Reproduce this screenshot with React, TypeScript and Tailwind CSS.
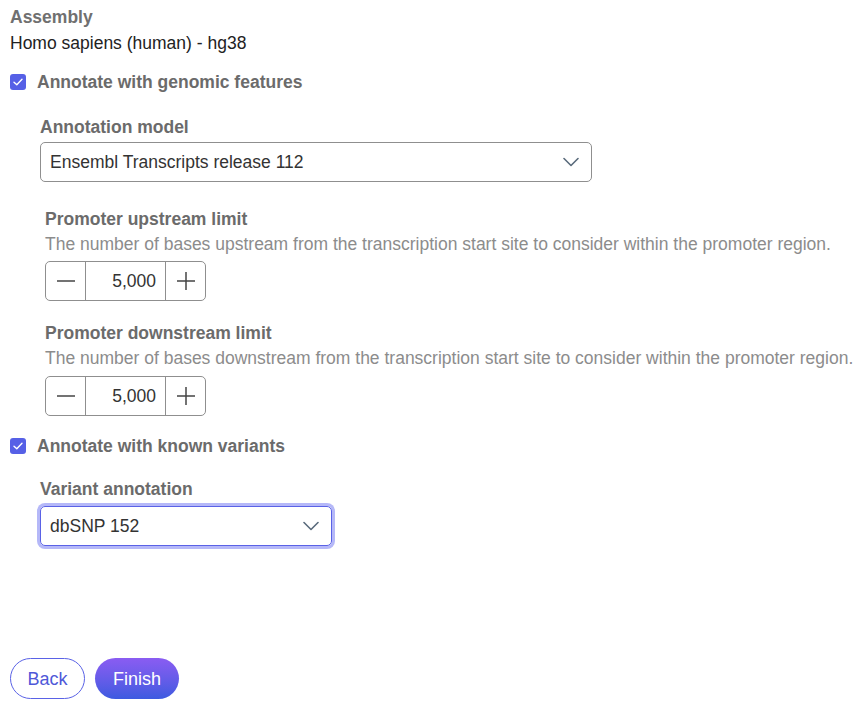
import React, { useState } from 'react';

function Checkbox({ checked, onChange }: { checked: boolean; onChange: () => void }) {
  return (
    <button
      type="button"
      onClick={onChange}
      className={`w-4 h-4 rounded-[3px] flex items-center justify-center shrink-0 ${checked ? 'bg-[#5660e6]' : 'border border-[#888] bg-white'}`}
    >
      {checked && (
        <svg width="10" height="8" viewBox="0 0 10 8" fill="none">
          <path d="M1 4.2 L3.8 6.8 L9 1.2" stroke="white" strokeWidth="1.4" strokeLinecap="round" strokeLinejoin="round" />
        </svg>
      )}
    </button>
  );
}

function Chevron() {
  return (
    <svg width="16" height="10" viewBox="0 0 16 10" fill="none">
      <path d="M1 1.5 L8 8.5 L15 1.5" stroke="#5a6b7c" strokeWidth="1.6" strokeLinecap="round" strokeLinejoin="round" />
    </svg>
  );
}

function Stepper({ value }: { value: number }) {
  const [v, setV] = useState(value);
  return (
    <div className="flex h-10 w-[161px] border border-[#8f8f8f] rounded-[5px] overflow-hidden">
      <button type="button" onClick={() => setV(v - 100)} className="w-10 flex items-center justify-center border-r border-[#8f8f8f]">
        <svg width="18" height="2" viewBox="0 0 18 2"><path d="M0 1 H18" stroke="#444" strokeWidth="1.5" /></svg>
      </button>
      <div className="flex-1 flex items-center justify-end pr-[9px] text-[#333]">{v.toLocaleString('en-US')}</div>
      <button type="button" onClick={() => setV(v + 100)} className="w-10 flex items-center justify-center border-l border-[#8f8f8f]">
        <svg width="18" height="18" viewBox="0 0 18 18"><path d="M0 9 H18 M9 0 V18" stroke="#444" strokeWidth="1.5" /></svg>
      </button>
    </div>
  );
}

export default function App() {
  const [genomic, setGenomic] = useState(true);
  const [variants, setVariants] = useState(true);

  return (
    <div className="min-h-screen bg-white text-[17.5px] leading-[20px] font-['Liberation_Sans',Arial,sans-serif] px-[10px] pt-[7px] flex flex-col">
      <div className="font-bold text-[#707070]">Assembly</div>
      <div className="mt-[6px] text-[#222]">Homo sapiens (human) - hg38</div>

      <div className="mt-[19px] flex items-center gap-[11px]">
        <Checkbox checked={genomic} onChange={() => setGenomic(!genomic)} />
        <span className="font-bold text-[#6b6b6b]">Annotate with genomic features</span>
      </div>

      <div className="pl-[30px]">
        <div className="mt-[25px] font-bold text-[#6b6b6b]">Annotation model</div>
        <div className="mt-[5px] w-[552px] h-10 border border-[#8f8f8f] rounded-[5px] flex items-center justify-between pl-[9px] pr-[12px] text-[#333]">
          <span>Ensembl Transcripts release 112</span>
          <Chevron />
        </div>

        <div className="pl-[5px]">
          <div className="mt-[27px] font-bold text-[#6b6b6b]">Promoter upstream limit</div>
          <div className="mt-[5px] text-[#8c8c8c] whitespace-nowrap">The number of bases upstream from the transcription start site to consider within the promoter region.</div>
          <div className="mt-[7px]"><Stepper value={5000} /></div>

          <div className="mt-[22px] font-bold text-[#6b6b6b]">Promoter downstream limit</div>
          <div className="mt-[5px] text-[#8c8c8c] whitespace-nowrap">The number of bases downstream from the transcription start site to consider within the promoter region.</div>
          <div className="mt-[8px]"><Stepper value={5000} /></div>
        </div>
      </div>

      <div className="mt-[20px] flex items-center gap-[11px]">
        <Checkbox checked={variants} onChange={() => setVariants(!variants)} />
        <span className="font-bold text-[#6b6b6b]">Annotate with known variants</span>
      </div>

      <div className="pl-[30px]">
        <div className="mt-[23px] font-bold text-[#6b6b6b]">Variant annotation</div>
        <div className="mt-[7px] w-[292px] h-10 border border-[#5a62e6] rounded-[5px] shadow-[0_0_0_3px_rgba(120,126,242,0.55)] flex items-center justify-between pl-[9px] pr-[12px] text-[#333]">
          <span>dbSNP 152</span>
          <Chevron />
        </div>
      </div>

      <div className="mt-[112px] flex gap-[10px]">
        <button type="button" className="h-[41px] w-[75px] rounded-full border border-[#5a62e6] text-[#4f58d8] text-[18px]">Back</button>
        <button type="button" className="h-[41px] w-[84px] rounded-full bg-gradient-to-b from-[#8a5cf2] to-[#3c5ae0] text-white text-[18px]">Finish</button>
      </div>
    </div>
  );
}
